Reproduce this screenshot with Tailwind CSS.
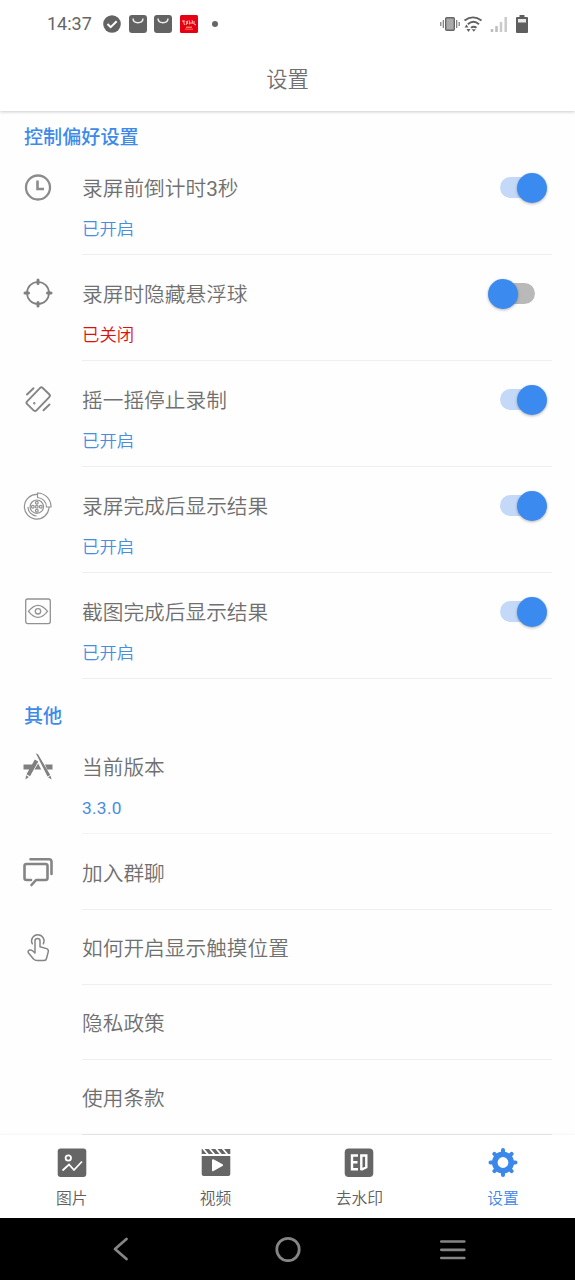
<!DOCTYPE html>
<html lang="zh-CN">
<head>
<meta charset="utf-8">
<title>设置</title>
<script src="https://cdn.jsdelivr.net/npm/@tailwindcss/browser@4"></script>
</head>
<body class="w-[575px] h-[1280px] overflow-hidden bg-[#fefefe] flex flex-col font-['Roboto','Noto_Sans_CJK_SC',sans-serif] font-[350] text-[#707070]">
<header class="relative z-10 h-[111px] shrink-0 bg-white shadow-[0_1px_3px_rgba(0,0,0,0.2)]">
  <div class="h-12 pl-[47px] pr-[47px] flex items-center justify-between">
    <div class="flex items-center">
      <span class="w-[56px] text-[18px] leading-none font-normal text-[#666]">14:37</span>
      <svg width="18" height="18" viewBox="0 0 18 18"><circle cx="9" cy="9" r="8.8" fill="#636363"/><path d="M4.500 9l3.200 3.200 6-6" fill="none" stroke="#fff" stroke-width="2"/></svg>
      <svg class="ml-2" width="18" height="18" viewBox="0 0 18 18"><rect width="18" height="18" rx="3" fill="#636363"/><path d="M4 3.500c.4 5.600 9.600 5.600 10 0" fill="none" stroke="#eee" stroke-width="1.500"/></svg>
      <svg class="ml-[7px]" width="18" height="18" viewBox="0 0 18 18"><rect width="18" height="18" rx="3" fill="#636363"/><path d="M4 3.500c.4 5.600 9.600 5.600 10 0" fill="none" stroke="#eee" stroke-width="1.500"/></svg>
      <svg class="ml-2" width="18" height="18" viewBox="0 0 18 18"><rect width="18" height="18" rx="1.500" fill="#e60012"/><path d="M2 6h3M3.500 6l1 4M6 6l2 3M8 5.500L6 10M9.500 5.500v4M9 8h3M12 5l1 4M14 6v3l2 1" stroke="#ffb8b0" fill="none"/><path d="M6 12.200h6" stroke="#ffbe60"/><path d="M5 14.200h8" stroke="#f87171"/></svg>
      <span class="ml-[14px] size-[6px] rounded-full bg-[#666]"></span>
    </div>
    <div class="flex items-center">
      <svg width="20" height="18" viewBox="0 0 20 18"><rect x="5.700" y="2.700" width="8.600" height="12.600" rx="1" fill="#aaa" stroke="#666" stroke-width="1.400"/><path d="M3.300 5v8M.8 7v4M16.700 5v8M19.200 7v4" stroke="#777" stroke-width="1.200"/></svg>
      <svg class="ml-[3px]" width="20" height="18" viewBox="0 0 20 18"><path d="M1.500 5.500Q10 -.8 18.500 5.500M4.800 9.200Q10.500 4.500 16 9.200M8 12.800q2.800-2.300 5.500 0" fill="none" stroke="#606060" stroke-width="1.900"/><path d="M8.800 14.200h4l-2 2.500zM3.500 9.500l2 3h-4zM5.500 17l-2-3h4z" fill="#606060"/></svg>
      <svg class="ml-[7px]" width="18" height="17" viewBox="0 0 18 17"><path d="M2 13v3M6.500 10v6" stroke="#bdbdbd" stroke-width="2.500"/><path d="M11 6v10M15.700 1v15" stroke="#cacaca" stroke-width="2.500"/></svg>
      <svg class="ml-[8px]" width="12" height="18" viewBox="0 0 12 18"><path d="M3.500 0h5v2H11q1 0 1 1v14q0 1-1 1H1q-1 0-1-1V3q0-1 1-1h2.500z" fill="#5e5e5e"/><path d="M2 4h8v3.500H2z" fill="#e8e8e8"/></svg>
    </div>
  </div>
  <h1 class="h-[63px] flex items-center justify-center text-[21.300px]">设置</h1>
</header>

<main class="h-[1024px] shrink-0">
  <h2 class="h-[38px] pl-6 pt-[13px] text-[19.100px] leading-[28px] font-medium text-[#3d8aea]">控制偏好设置</h2>

  <section class="h-[106px] flex pl-[22px] pr-[23px]">
    <svg class="mt-[22px] w-8 h-8 shrink-0" viewBox="0 0 32 32" fill="none" stroke="#8c8c8c" stroke-width="2.300"><circle cx="16" cy="16.500" r="12"/><path d="M15.500 9.500v8.500h6.500" stroke-width="2.600"/></svg>
    <div class="ml-7 flex-1 relative border-b border-[#eee]">
      <p class="pt-[25px] text-[20.700px] leading-[30px]">录屏前倒计时<span class="font-normal">3</span>秒</p>
      <p class="mt-[13px] text-[17.400px] leading-6 text-[#478de0]">已开启</p>
      <div class="absolute right-[5px] top-[23.5px] w-[47px] h-[30px] flex items-center"><span class="w-[36px] h-[21px] rounded-full bg-[#c4d9f7]"></span><span class="absolute right-0 size-[30px] rounded-full bg-[#3b8af0] shadow-[0_1px_3px_rgba(0,0,0,0.3)]"></span></div>
    </div>
  </section>

  <section class="h-[106px] flex pl-[22px] pr-[23px]">
    <svg class="mt-[22px] w-8 h-8 shrink-0" viewBox="0 0 32 32" fill="none" stroke="#808080"><circle cx="16" cy="16" r="11" stroke-width="1.700"/><path d="M16 3v3.500M16 25.500v3.500M3 16h3.500M25.500 16h3.500" stroke-width="3" stroke-linecap="round"/></svg>
    <div class="ml-7 flex-1 relative border-b border-[#eee]">
      <p class="pt-[25px] text-[20.700px] leading-[30px]">录屏时隐藏悬浮球</p>
      <p class="mt-[13px] text-[17.400px] leading-6 text-[#de1010]">已关闭</p>
      <div class="absolute right-[17px] top-[23.5px] w-[47px] h-[30px] flex items-center justify-end"><span class="w-[36px] h-[21px] rounded-full bg-[#b9b9b9]"></span><span class="absolute left-0 size-[30px] rounded-full bg-[#3b8af0] shadow-[0_1px_3px_rgba(0,0,0,0.3)]"></span></div>
    </div>
  </section>

  <section class="h-[106px] flex pl-[22px] pr-[23px]">
    <svg class="mt-[22px] w-8 h-8 shrink-0" viewBox="0 0 32 32" fill="none" stroke="#858585" stroke-width="1.900" stroke-linecap="round"><rect x="9.700" y="5" width="13" height="22.400" rx="2" transform="rotate(44 16.200 16.200)"/><path d="M5 11.500l6.500-6.300M21.500 27.300l6-5.800" stroke-width="1.900"/><circle cx="12.300" cy="20.300" r=".5" stroke-width="1.400"/></svg>
    <div class="ml-7 flex-1 relative border-b border-[#eee]">
      <p class="pt-[25px] text-[20.700px] leading-[30px]">摇一摇停止录制</p>
      <p class="mt-[13px] text-[17.400px] leading-6 text-[#478de0]">已开启</p>
      <div class="absolute right-[5px] top-[23.5px] w-[47px] h-[30px] flex items-center"><span class="w-[36px] h-[21px] rounded-full bg-[#c4d9f7]"></span><span class="absolute right-0 size-[30px] rounded-full bg-[#3b8af0] shadow-[0_1px_3px_rgba(0,0,0,0.3)]"></span></div>
    </div>
  </section>

  <section class="h-[106px] flex pl-[22px] pr-[23px]">
    <svg class="mt-[23px] w-8 h-8 shrink-0" viewBox="0 0 32 32" fill="none" stroke="#929292" stroke-width="1.200"><path d="M15.500 4.500A12.300 12.300 0 1 0 27 17.500M15.500 3v4.500a9.500 9.500 0 0 1 9 9.500h4.500A13.700 13.700 0 0 0 15.500 3zM6 17a9 9 0 0 0 8.500 9"/><circle cx="14.800" cy="16.700" r="6.700"/><circle cx="14.800" cy="16.700" r="1.300"/><circle cx="14.800" cy="12.700" r="1.400"/><circle cx="14.800" cy="20.700" r="1.400"/><circle cx="10.800" cy="16.700" r="1.400"/><circle cx="18.800" cy="16.700" r="1.400"/></svg>
    <div class="ml-7 flex-1 relative border-b border-[#eee]">
      <p class="pt-[25px] text-[20.700px] leading-[30px]">录屏完成后显示结果</p>
      <p class="mt-[13px] text-[17.400px] leading-6 text-[#478de0]">已开启</p>
      <div class="absolute right-[5px] top-[23.5px] w-[47px] h-[30px] flex items-center"><span class="w-[36px] h-[21px] rounded-full bg-[#c4d9f7]"></span><span class="absolute right-0 size-[30px] rounded-full bg-[#3b8af0] shadow-[0_1px_3px_rgba(0,0,0,0.3)]"></span></div>
    </div>
  </section>

  <section class="h-[106px] flex pl-[22px] pr-[23px]">
    <svg class="mt-[22px] w-8 h-8 shrink-0" viewBox="0 0 32 32" fill="none" stroke="#929292" stroke-width="1.300"><rect x="3.700" y="4" width="24.600" height="24.600" rx="2"/><path d="M6.500 16.300q9.500-12 19 0q-9.500 12-19 0z"/><circle cx="16" cy="16.300" r="2.700"/></svg>
    <div class="ml-7 flex-1 relative border-b border-[#eee]">
      <p class="pt-[25px] text-[20.700px] leading-[30px]">截图完成后显示结果</p>
      <p class="mt-[13px] text-[17.400px] leading-6 text-[#478de0]">已开启</p>
      <div class="absolute right-[5px] top-[23.5px] w-[47px] h-[30px] flex items-center"><span class="w-[36px] h-[21px] rounded-full bg-[#c4d9f7]"></span><span class="absolute right-0 size-[30px] rounded-full bg-[#3b8af0] shadow-[0_1px_3px_rgba(0,0,0,0.3)]"></span></div>
    </div>
  </section>

  <h2 class="h-[49px] pl-6 pt-[24px] text-[19.100px] leading-[28px] font-medium text-[#3d8aea]">其他</h2>

  <section class="h-[106px] flex pl-[22px] pr-[23px]">
    <svg class="mt-[23px] w-8 h-8 shrink-0" viewBox="0 0 32 32" fill="#808080"><path d="M1.500 13.500h9L8 18.500H1.500zM23 13.500h7.500v5H25.300zM12.500 18.500l3.700-6 3 6zM12.800 8.500l3.500 2L8 25.300l-3.500-2zM4 24.200l2.800 1.800-3.300 2.500zM13.800 2.300l2.200 1L28.300 24l-2.800 1.500zM26 26.200l2.600-1.400 1 3.700z"/></svg>
    <div class="ml-7 flex-1 border-b border-[#f3f3f3]">
      <p class="pt-[25px] text-[20.700px] leading-[30px]">当前版本</p>
      <p class="mt-[13px] text-[17.300px] leading-6 font-normal tracking-[0.3px] text-[#478de0]">3.3.0</p>
    </div>
  </section>

  <section class="h-[76px] flex pl-[22px] pr-[23px]">
    <svg class="mt-[22px] w-8 h-8 shrink-0" viewBox="0 0 32 32" fill="none" stroke="#858585" stroke-width="2.600" stroke-linecap="round" stroke-linejoin="round"><path d="M8.500 3.300H27q2.500 0 2.500 2.500V18M9 24H4.500q-2 0-2-2V10q0-2 2-2h19q2 0 2 2V22q0 2-2 2H14l-4.500 5"/></svg>
    <div class="ml-7 flex-1 border-b border-[#eee]"><p class="pt-[25px] text-[20.700px] leading-[30px]">加入群聊</p></div>
  </section>

  <section class="h-[75px] flex pl-[22px] pr-[23px]">
    <svg class="mt-[22px] w-8 h-8 shrink-0" viewBox="0 0 32 32" fill="none" stroke="#858585" stroke-width="1.500" stroke-linejoin="round" stroke-linecap="round"><path d="M10.300 11.800a6.200 6.200 0 1 1 11 0"/><path d="M13 20V8.800q0-2.300 2.500-2.300T18 8.800v6l6.500 1.800q2.200.8 1.800 3L24.500 26.500q-.4 2-2.500 2h-7q-2 0-3.500-1.500l-5.200-6.200q-.7-2.300 1.500-2.800 1.500-.3 2.700.8L13 21V17"/></svg>
    <div class="ml-7 flex-1 border-b border-[#eee]"><p class="pt-[24px] text-[20.700px] leading-[30px]">如何开启显示触摸位置</p></div>
  </section>

  <section class="h-[75px] pl-[82px] pr-[23px]"><div class="h-full border-b border-[#eee]"><p class="pt-[24px] text-[20.700px] leading-[30px]">隐私政策</p></div></section>
  <section class="h-[75px] pl-[82px] pr-[23px]"><div class="h-full border-b border-[#e8e8e8]"><p class="pt-[24px] text-[20.700px] leading-[30px]">使用条款</p></div></section>
</main>

<nav class="relative h-[83px] shrink-0 bg-white grid grid-cols-4 text-[15.800px] leading-6 text-[#606060] shadow-[0_-1px_2px_rgba(0,0,0,0.04)]">
  <div class="flex flex-col items-center pt-[13px]">
    <svg width="30" height="30" viewBox="0 0 30 30"><rect x=".7" y=".5" width="28.600" height="28.600" rx="3" fill="#666"/><g fill="none" stroke="#fff" stroke-width="1.800"><circle cx="11.300" cy="10" r="2.700"/><path d="M5.500 22.500l6.500-6 5 5.500L25 13.500"/></g></svg>
    <span class="mt-[9px]">图片</span>
  </div>
  <div class="flex flex-col items-center pt-[13px]">
    <svg width="30" height="30" viewBox="0 0 30 30"><path d="M.7 1h28.600v5H.7zM.7 8h28.600v18q0 2-2 2H2.700q-2 0-2-2z" fill="#666"/><path d="M2 .5l5 6M8.500.5l5 6M15 .5l5 6M21.500.5l5 6" stroke="#fff" stroke-width="1.800"/><path d="M12 12.200l9 5-9 5z" fill="#fff" stroke="#fff" stroke-width="2" stroke-linejoin="round"/></svg>
    <span class="mt-[9px]">视频</span>
  </div>
  <div class="flex flex-col items-center pt-[13px]">
    <svg width="30" height="30" viewBox="0 0 30 30"><rect x=".7" y=".5" width="28.600" height="28.600" rx="4" fill="#666"/><path d="M14 7.500H8v13.700h6M8 14.300h5.500M17.300 6.300v16M17.300 7.500h5v11.700l-5 2.600" fill="none" stroke="#fff" stroke-width="2.400"/></svg>
    <span class="mt-[9px]">去水印</span>
  </div>
  <div class="flex flex-col items-center pt-[13px] text-[#3b88ea]">
    <svg width="30" height="30" viewBox="0 0 30 30" fill="none" stroke="#3b88ea"><circle cx="15" cy="14.500" r="8.200" stroke-width="5.600"/><path d="M15 2v3M15 24v3M2.500 14.500h3M24.500 14.500h3M6.400 5.900l1.500 1.500M22.100 21.600l1.500 1.500M6.400 23.100l1.500-1.500M22.100 7.400l1.500-1.500" stroke-width="4" stroke-linecap="round"/></svg>
    <span class="mt-[9px]">设置</span>
  </div>
</nav>

<footer class="relative h-[62px] shrink-0 bg-black flex items-center justify-between pl-[111px] pr-[108px]">
  <svg width="18" height="26" viewBox="0 0 18 26" fill="none" stroke="#858585" stroke-width="2.800" stroke-linecap="round" stroke-linejoin="round"><path d="M15.500 3L4 13l11.500 10"/></svg>
  <svg class="ml-[7px]" width="26" height="26" viewBox="0 0 26 26" fill="none" stroke="#858585" stroke-width="2.800"><circle cx="13" cy="13.500" r="11.200"/></svg>
  <svg width="28" height="26" viewBox="0 0 28 26" stroke="#858585" stroke-width="2.700" stroke-linecap="round"><path d="M2.300 5.500h23M2.300 13.800h23M2.300 22h23"/></svg>
</footer>
</body>
</html>
